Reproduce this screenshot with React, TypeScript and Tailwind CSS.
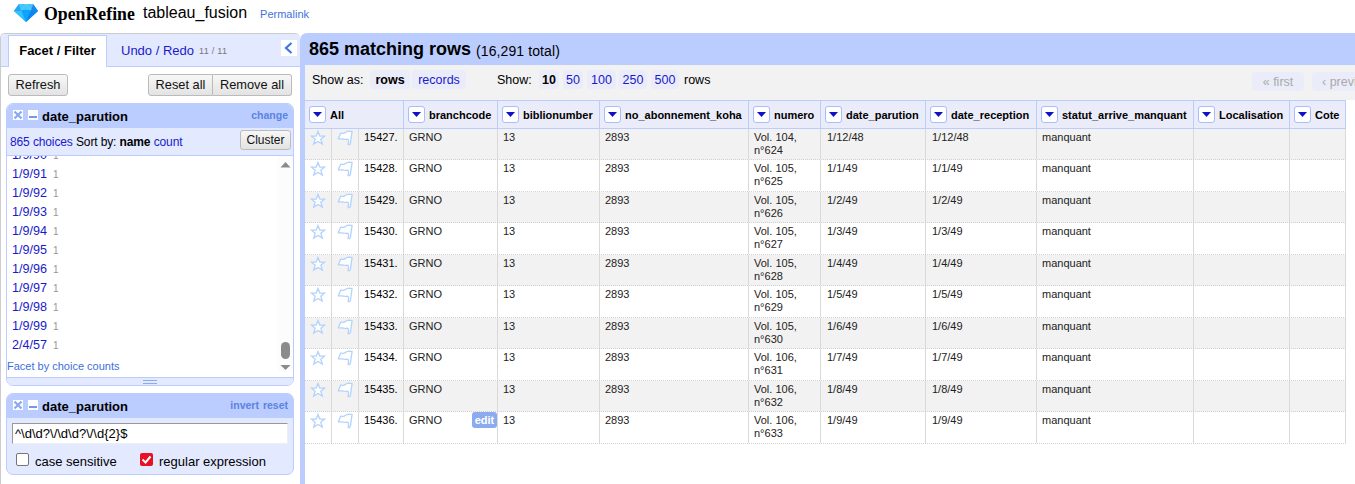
import React from "react";

const columns = [
  { name: "branchcode", cls: "w-[94px]" },
  { name: "biblionumber", cls: "w-[102px]" },
  { name: "no_abonnement_koha", cls: "w-[149px]" },
  { name: "numero", cls: "w-[72px]" },
  { name: "date_parution", cls: "w-[105px]" },
  { name: "date_reception", cls: "w-[111px]" },
  { name: "statut_arrive_manquant", cls: "w-[157px]" },
  { name: "Localisation", cls: "w-[96px]" },
  { name: "Cote", cls: "w-[56px]" },
];

const rows = [
  { id: 15427, vol: 104, n: 624, date: "1/12/48" },
  { id: 15428, vol: 105, n: 625, date: "1/1/49" },
  { id: 15429, vol: 105, n: 626, date: "1/2/49" },
  { id: 15430, vol: 105, n: 627, date: "1/3/49" },
  { id: 15431, vol: 105, n: 628, date: "1/4/49" },
  { id: 15432, vol: 105, n: 629, date: "1/5/49" },
  { id: 15433, vol: 105, n: 630, date: "1/6/49" },
  { id: 15434, vol: 106, n: 631, date: "1/7/49" },
  { id: 15435, vol: 106, n: 632, date: "1/8/49" },
  { id: 15436, vol: 106, n: 633, date: "1/9/49" },
];

const choices = ["1/9/90", "1/9/91", "1/9/92", "1/9/93", "1/9/94", "1/9/95", "1/9/96", "1/9/97", "1/9/98", "1/9/99", "2/4/57"];

function Diamond() {
  return (
    <svg width="24" height="20" viewBox="0 0 24 20" className="shrink-0">
      <path d="M5 1h14l5 7-12 11L0 8z" fill="#129bf5" />
      <path d="M5 1h14l-2.500 6h-9z" fill="#43c6ff" />
      <path d="M5 1L0 8h7.500z" fill="#2aa5f2" />
      <path d="M19 1l5 7h-7.500z" fill="#1b86e6" />
      <path d="M7.500 7.500h9L12 19z" fill="#0ba4ff" />
      <path d="M0 8h7.500L12 19z" fill="#2fc3fb" />
      <path d="M24 8h-7.500L12 19z" fill="#0a86ee" />
      <path d="M5 1l2.500 6.500L12 1l4.500 6.500L19 1" fill="none" stroke="#6fd2ff" strokeWidth=".5" />
    </svg>
  );
}

function Star() {
  return (
    <svg className="-mt-px" width="16" height="16" viewBox="0 0 16 16">
      <path d="M8 1.500l1.800 4.600 4.700.1-3.700 3 1.500 4.900L8 11.400l-4.300 2.700 1.500-4.900-3.700-3 4.700-.1z" fill="#fff" stroke="#b3d3fb" strokeWidth="1.300" />
    </svg>
  );
}

function Flag() {
  return (
    <svg className="-mt-px" width="16" height="16" viewBox="0 0 16 16">
      <path d="M3.700 3.200L1.300 8.800c2.200.5 3.200-.2 4.700.2 1.500.5 2.600.6 4 .2 1.200 0 1.700 1 1.500 2.300l-.4 3.200 1.700-.1c.7-1.500 1-3 1.100-4.900l1.200-8.300c-1.800.2-3.300-.5-4.900.1C8.200 2.200 8 3.200 6.500 3.400c-1 .1-1.700-.5-2.800-.2z" fill="#fff" stroke="#b3d3fb" strokeWidth="1.300" strokeLinejoin="round" />
    </svg>
  );
}

function MenuButton() {
  return (
    <span className="flex h-[17px] w-[17px] shrink-0 items-center justify-center rounded-[3px] border border-[#a9bcfb] bg-white">
      <svg width="9" height="5" viewBox="0 0 9 5"><path d="M0 0h9L4.500 5z" fill="#1010c8" /></svg>
    </span>
  );
}

function HeaderCell({ name, cls }: { name: string; cls: string }) {
  return (
    <div className={`flex shrink-0 items-center gap-1 border-r border-[#bbccff] pl-1 text-[11px] font-bold whitespace-nowrap ${cls}`}>
      <MenuButton />
      <span className="pt-px">{name}</span>
    </div>
  );
}

function Cell({ cls, children }: { cls: string; children?: React.ReactNode }) {
  return <div className={`flex shrink-0 border-r border-[#d9d9d9] pt-[2px] leading-[13px] ${cls}`}>{children}</div>;
}

function Row({ row, index }: { row: (typeof rows)[number]; index: number }) {
  const shade = index % 2 === 0 ? "h-[31px] bg-[#f2f2f2]" : "h-8 bg-white";
  return (
    <div className={`flex border-b border-dotted border-b-[#d2d2d2] text-[11px] text-[#222] ${shade}`}>
      <Cell cls="w-[27px] pl-[5px]"><Star /></Cell>
      <Cell cls="w-[27px] pl-[5px]"><Flag /></Cell>
      <Cell cls="w-[45px] pl-[5px] text-black">{row.id}.</Cell>
      <Cell cls="w-[94px] justify-between pl-[5px]">
        GRNO
        {index === 9 && (
          <span className="-mt-[2px] h-4 w-[25px] rounded-[3px] bg-[#8caaf0] text-center leading-4 font-bold text-white">edit</span>
        )}
      </Cell>
      <Cell cls="w-[102px] pl-[5px]">13</Cell>
      <Cell cls="w-[149px] pl-[5px]">2893</Cell>
      <Cell cls="w-[72px] pl-[5px]">Vol. {row.vol},<br />n°{row.n}</Cell>
      <Cell cls="w-[105px] pl-[6px]">{row.date}</Cell>
      <Cell cls="w-[111px] pl-[6px]">{row.date}</Cell>
      <Cell cls="w-[157px] pl-[5px]">manquant</Cell>
      <Cell cls="w-[96px]" />
      <Cell cls="w-[56px]" />
    </div>
  );
}

function Button({ cls, children }: { cls: string; children: React.ReactNode }) {
  return (
    <button className={`flex items-center justify-center border border-[#bbb] bg-linear-to-b from-[#f7f7f7] to-[#e3e3e3] whitespace-nowrap text-[#111] ${cls}`}>
      {children}
    </button>
  );
}

function FacetTitle({ children }: { children: React.ReactNode }) {
  return (
    <div className="flex h-[24px] items-start bg-[#bbccff] px-[5px] pt-[6px] pl-[6px]">
      <svg width="25" height="10" viewBox="0 0 25 10">
        <path d="M0 0h10v10H0zM15 0h10v10H15z" fill="#fff" />
        <path d="M1.500 1.500l7 7M8.500 1.500l-7 7" stroke="#88a8ef" strokeWidth="2.200" />
        <path d="M16 6h8v2h-8z" fill="#7299ea" />
      </svg>
      <span className="-mt-px ml-1 text-[13px] leading-[15px] font-bold">date_parution</span>
      <span className="-mt-px ml-auto flex gap-[4px] text-[10.5px] leading-3 font-bold text-[#5b83e2]">{children}</span>
    </div>
  );
}

function SizeLink({ cls, children }: { cls: string; children: React.ReactNode }) {
  return <span className={`flex h-[19px] shrink-0 items-center justify-center rounded-[4px] bg-[#eaecf9] text-[#1a1acc] ${cls}`}>{children}</span>;
}

function FacetPanel() {
  return (
    <aside className="flex h-[451px] w-[300px] shrink-0 flex-col rounded-t-[5px] border-t border-l border-[#ccc]">
      <div className="flex h-[33px] rounded-t-[4px] border-b border-[#bbccff] bg-[#e3e9ff]">
        <div className="mt-px ml-[7px] flex h-8 w-[99px] items-center justify-center border-x border-t border-[#bbccff] bg-white pb-[2px] text-[13px] font-bold">Facet / Filter</div>
        <div className="ml-[14px] flex items-center pt-px text-[13px] text-[#1a1acc]">
          Undo / Redo<span className="ml-[5px] pt-[2px] text-[9px] tracking-[0.3px] text-[#777]">11 / 11</span>
        </div>
        <div className="mt-[6px] mr-[3px] ml-auto flex h-4 w-4 items-center justify-center bg-white pr-px">
          <svg width="9" height="12" viewBox="0 0 9 12"><path d="M7.500 1L2 6l5.500 5" fill="none" stroke="#3f76e6" strokeWidth="2.200" /></svg>
        </div>
      </div>
      <div className="mt-[7px] flex pr-2 pl-[7px] text-[12.8px]">
        <Button cls="h-[22px] w-[60px] rounded-[3px]">Refresh</Button>
        <Button cls="ml-auto h-[22px] w-[65px] rounded-l-[3px]">Reset all</Button>
        <Button cls="h-[22px] w-[79px] rounded-r-[3px] border-l-0">Remove all</Button>
      </div>
      <section className="mt-[7px] mr-[6px] ml-[5px] flex h-[283px] flex-col overflow-hidden rounded-[7px] border border-[#bbccff]">
        <FacetTitle>change</FacetTitle>
        <div className="flex h-7 items-center border-b border-[#bbccff] bg-[#e3e9ff] pr-[2px] pl-[3px] text-[12px]">
          <span className="flex tracking-[-0.12px]">
            <span className="whitespace-pre text-[#1a1acc]">865 choices </span>
            <span className="whitespace-pre">Sort by: </span>
            <b className="whitespace-pre">name </b>
            <span className="text-[#1a1acc]">count</span>
          </span>
          <Button cls="mb-1 ml-auto h-5 w-[51px] rounded-[3px]">Cluster</Button>
        </div>
        <div className="flex h-[221px] overflow-hidden">
          <div className="flex flex-col">
            <div className="-mt-[10px] flex flex-col pl-[5px] text-[12.600px]">
              {choices.map((c) => (
                <div key={c} className="h-[19px] leading-[19px] text-[#1a1acc]">
                  {c}<span className="ml-[6px] text-[10px] text-[#a0958c]">1</span>
                </div>
              ))}
            </div>
            <div className="mt-[2px] text-[11px] leading-[19px] text-[#3c6fdc]">Facet by choice counts</div>
          </div>
          <svg className="ml-auto bg-[#fcfcfc]" width="15" height="216" viewBox="0 0 15 216">
            <path d="M2.500 11.500h10L7.500 6zM2.500 209h10L7.500 214z" fill="#8b8b8b" />
            <rect x="3" y="186" width="9" height="17" rx="4.500" fill="#8b8b8b" />
          </svg>
        </div>
        <div className="flex flex-1 justify-center border-t border-[#bbccff] bg-[#e3e9ff] pt-[2px]">
          <span className="h-[4px] w-[14px] border-y border-[#8caaf0]" />
        </div>
      </section>
      <section className="mt-[7px] mr-[6px] ml-[5px] h-[82px] overflow-hidden rounded-[7px] border border-[#bbccff] bg-[#e3e9ff]">
        <FacetTitle><span>invert</span><span>reset</span></FacetTitle>
        <div className="mx-[5px] mt-[5px] flex h-[21px] items-center border border-t-[#999] border-r-[#eee] border-b-[#eee] border-l-[#999] bg-white pl-[2px] text-[13px]">{"^\\d\\d?\\/\\d\\d?\\/\\d{2}$"}</div>
        <div className="mt-[9px] flex pl-[9px] text-[13px] leading-[15px]">
          <span className="h-[13px] w-[13px] rounded-[2px] border border-[#767676] bg-white" />
          <span className="mt-px ml-[6px] w-[82px] whitespace-nowrap">case sensitive</span>
          <svg className="ml-[23px]" width="13" height="13" viewBox="0 0 13 13">
            <rect width="13" height="13" rx="2" fill="#e81123" />
            <path d="M2.500 6.500l3 3 5-6" fill="none" stroke="#fff" strokeWidth="2" />
          </svg>
          <span className="mt-px ml-[6px]">regular expression</span>
        </div>
      </section>
    </aside>
  );
}

export default function App() {
  return (
    <div className="h-[484px] w-[1355px] overflow-hidden bg-white font-['Liberation_Sans',Arial,sans-serif] text-black">
      <header className="flex h-[33px] items-start pl-[14px]">
        <div className="pt-[3px]"><Diamond /></div>
        <span className="mt-[4px] ml-[6px] w-[91px] font-['Liberation_Serif',serif] text-[17.800px] leading-5 font-bold">OpenRefine</span>
        <span className="mt-[3px] ml-[8px] text-[16px] leading-5">tableau_fusion</span>
        <span className="mt-[7px] ml-[13px] text-[11px] leading-[14px] text-[#4272db]">Permalink</span>
      </header>
      <div className="flex">
        <FacetPanel />
        <main className="flex h-[451px] w-[1055px] shrink-0 flex-col overflow-hidden rounded-tl-[7px] bg-[#bbccff] pl-[5px]">
          <div className="flex h-8 items-center pl-1">
            <span className="pt-px text-[18px] font-bold">865 matching rows</span>
            <span className="ml-[5px] pt-1 text-[14px] tracking-[0.1px]">(16,291 total)</span>
          </div>
          <div className="flex h-[35px] shrink-0 items-start bg-[#f2f2f2] pt-[5px] pl-[7px] text-[12.500px] leading-5">
            <span className="w-[58px] shrink-0">Show as:</span>
            <SizeLink cls="w-[40px]"><b className="text-black">rows</b></SizeLink>
            <SizeLink cls="ml-[2px] w-[54px]">records</SizeLink>
            <span className="ml-[31px] w-[42px] shrink-0">Show:</span>
            <SizeLink cls="w-[20px]"><b className="text-black">10</b></SizeLink>
            <SizeLink cls="ml-[4px] w-[20px]">50</SizeLink>
            <SizeLink cls="ml-[4px] w-[29px]">100</SizeLink>
            <SizeLink cls="ml-[3px] w-[28px]">250</SizeLink>
            <SizeLink cls="ml-[4px] w-[28px]">500</SizeLink>
            <span className="ml-[5px] w-7 shrink-0">rows</span>
            <span className="mt-[2px] ml-[540px] flex h-[19px] w-[52px] shrink-0 items-center justify-center rounded-[4px] bg-[#eaecf9] text-[#aaa]">« first</span>
            <span className="mt-[2px] ml-2 flex h-[19px] w-[76px] shrink-0 items-center rounded-[4px] bg-[#eaecf9] pl-[10px] whitespace-nowrap text-[#aaa]">‹ previous</span>
          </div>
          <div className="flex flex-1 flex-col items-start bg-white">
            <div className="flex h-[29px] border-y border-[#bbccff] bg-[#eaecf9]">
              <HeaderCell name="All" cls="w-[99px]" />
              {columns.map((c) => <HeaderCell key={c.name} name={c.name} cls={c.cls} />)}
            </div>
            {rows.map((r, i) => <Row key={r.id} row={r} index={i} />)}
          </div>
        </main>
      </div>
    </div>
  );
}
